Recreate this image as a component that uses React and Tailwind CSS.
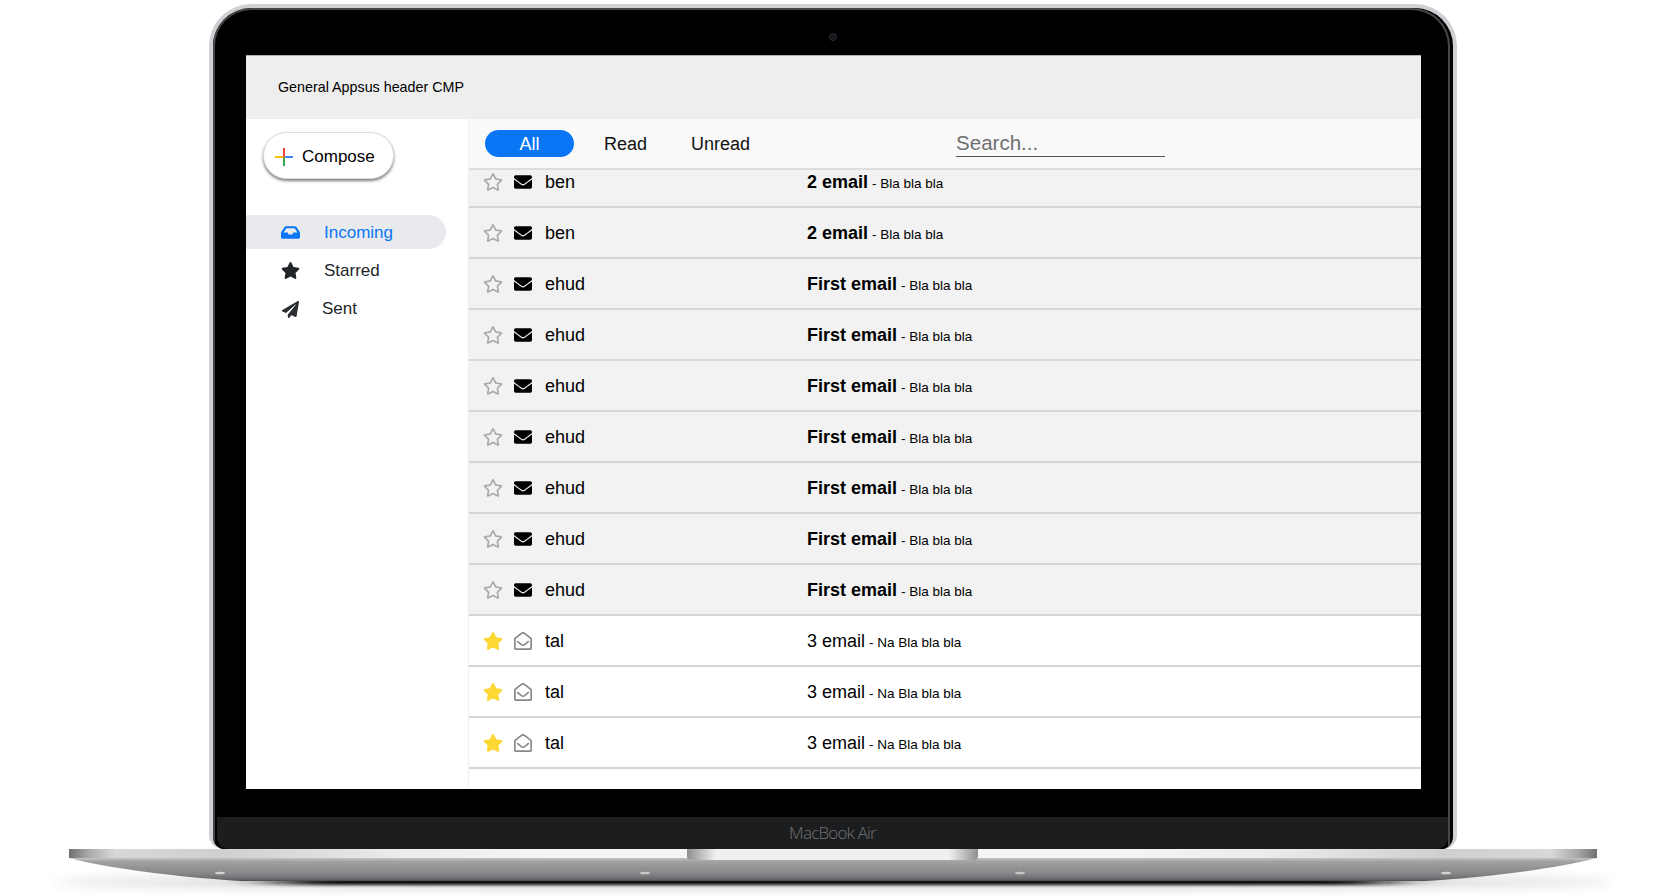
import React from 'react';
import { FaEnvelope, FaInbox, FaPaperPlane, FaRegEnvelopeOpen, FaRegStar, FaStar } from 'react-icons/fa';

const emails = [
  { from: 'ben', subject: '2 email', body: 'Bla bla bla' },
  { from: 'ben', subject: '2 email', body: 'Bla bla bla' },
  ...Array.from({ length: 7 }, () => ({ from: 'ehud', subject: 'First email', body: 'Bla bla bla' })),
  ...Array.from({ length: 3 }, () => ({ from: 'tal', subject: '3 email', body: 'Na Bla bla bla', read: true, starred: true })),
];

const PlusIcon = () => (
  <svg viewBox="0 0 18 18" className="w-[18px] h-[18px] shrink-0">
    <rect x="8" y="0" width="2" height="8" fill="#ea4335" />
    <rect x="8" y="10" width="2" height="8" fill="#34a853" />
    <rect x="0" y="8" width="8" height="2" fill="#fbbc05" />
    <rect x="10" y="8" width="8" height="2" fill="#4285f4" />
    <rect x="8" y="8" width="2" height="2" fill="#c9853a" />
  </svg>
);

const EmailRow = ({ email }) => (
  <div className={`flex items-center h-[51px] shrink-0 pl-[14px] pt-[1px] border-b-2 border-[#d6d6d6] text-black ${email.read ? 'bg-white' : 'bg-[#f2f2f2]'}`}>
    {email.starred ? (
      <FaStar className="w-5 h-5 shrink-0 text-[#fdd835]" />
    ) : (
      <FaRegStar className="w-5 h-5 shrink-0 text-[#aaaaaa]" />
    )}
    <div className="ml-[11px] w-[18px] shrink-0">
      {email.read ? (
        <FaRegEnvelopeOpen className="w-[18px] h-[18px] text-[#888888]" />
      ) : (
        <FaEnvelope className="w-[18px] h-[18px] text-black" />
      )}
    </div>
    <span className="ml-[13px] w-[262px] shrink-0 text-[18px]">{email.from}</span>
    <span className={`pt-[1px] text-[18px] ${email.read ? '' : 'font-bold'}`}>{email.subject}</span>
    <span className="text-[13.5px] ml-[4px] mt-[4px]">- {email.body}</span>
  </div>
);

const Base = () => (
  <svg viewBox="0 849 1666 47" className="block w-[1666px] h-[47px] shrink-0">
    <defs>
      <linearGradient id="strip" x1="69" x2="1597" y1="0" y2="0" gradientUnits="userSpaceOnUse">
        <stop offset="0" stopColor="#6f6f6f" />
        <stop offset="0.012" stopColor="#a6a6a6" />
        <stop offset="0.03" stopColor="#d8d8d8" />
        <stop offset="0.1" stopColor="#cfcfcf" />
        <stop offset="0.22" stopColor="#ececec" />
        <stop offset="0.32" stopColor="#f5f5f5" />
        <stop offset="0.68" stopColor="#f5f5f5" />
        <stop offset="0.78" stopColor="#ececec" />
        <stop offset="0.9" stopColor="#cfcfcf" />
        <stop offset="0.97" stopColor="#d8d8d8" />
        <stop offset="0.988" stopColor="#a6a6a6" />
        <stop offset="1" stopColor="#6f6f6f" />
      </linearGradient>
      <linearGradient id="body" x1="0" x2="0" y1="858" y2="881" gradientUnits="userSpaceOnUse">
        <stop offset="0" stopColor="#c4c4c6" />
        <stop offset="0.15" stopColor="#a2a2a4" />
        <stop offset="0.7" stopColor="#858587" />
        <stop offset="0.92" stopColor="#6a6a6e" />
        <stop offset="1" stopColor="#4a4a4e" />
      </linearGradient>
      <linearGradient id="notch" x1="687" x2="978" y1="0" y2="0" gradientUnits="userSpaceOnUse">
        <stop offset="0" stopColor="#8f8f8f" />
        <stop offset="0.1" stopColor="#f0f0f0" />
        <stop offset="0.9" stopColor="#f0f0f0" />
        <stop offset="1" stopColor="#8f8f8f" />
      </linearGradient>
      <filter id="soft" x="-10%" y="-400%" width="120%" height="900%">
        <feGaussianBlur stdDeviation="6" />
      </filter>
      <filter id="tight" x="-10%" y="-300%" width="120%" height="700%">
        <feGaussianBlur stdDeviation="30 1.5" />
      </filter>
    </defs>
    <ellipse cx="833" cy="882" rx="780" ry="6" fill="#000" opacity="0.2" filter="url(#soft)" />
    <rect x="280" y="879" width="1106" height="6" fill="#111" filter="url(#tight)" />
    <path d="M69 858 H1597 C1560 868 1490 877 1425 881 H241 C176 877 106 868 69 858 Z" fill="url(#body)" />
    <rect x="69" y="849" width="1528" height="9" fill="url(#strip)" />
    <path d="M687 849 H978 V856 Q978 860 974 860 H691 Q687 860 687 856 Z" fill="url(#notch)" />
    <ellipse cx="220" cy="873" rx="5" ry="1.3" fill="#d4d4d4" />
    <ellipse cx="645" cy="873" rx="5" ry="1.3" fill="#c8c8c8" />
    <ellipse cx="1020" cy="873" rx="5" ry="1.3" fill="#c8c8c8" />
    <ellipse cx="1446" cy="873" rx="5" ry="1.3" fill="#d4d4d4" />
  </svg>
);

const App = () => {
  return (
    <div className="w-[1666px] h-[896px] overflow-hidden bg-white flex flex-col items-center pt-[4px] font-['Liberation_Sans',Arial,sans-serif]">
      {/* lid */}
      <div className="w-[1248px] h-[845px] shrink-0 flex flex-col px-[4px] pt-[4px] rounded-t-[42px] rounded-b-[14px] bg-[#cfd0d4]">
        <div className="flex-1 flex flex-col pr-[3px] overflow-hidden rounded-t-[38px] rounded-b-[12px] bg-black">
          <div className="flex-1 flex flex-col overflow-hidden border-2 border-b-0 border-[#47474a] rounded-t-[38px] bg-black">
            <div className="h-[45px] pt-[9px] flex items-center justify-center shrink-0">
              <div className="w-2 h-2 ml-[2px] rounded-full bg-[#16161c] border border-[#2b2b33]" />
            </div>

            {/* screen */}
            <div className="ml-[31px] w-[1175px] h-[734px] shrink-0 flex flex-col overflow-hidden bg-white border-t border-[#b0b0b0]">
              <header className="h-[63px] shrink-0 flex items-center pl-[32px] bg-[#eeeeee] text-[14.3px] text-black">
                General Appsus header CMP
              </header>

              <div className="flex-1 flex min-h-0">
                <aside className="w-[223px] shrink-0 pt-[13px] bg-white border-r border-[#eeeeee]">
                  <button className="ml-[17px] w-[131px] h-[47px] flex items-center pl-[11px] gap-[9px] rounded-full bg-white border border-[#dddddd] shadow-[0_2px_3px_rgba(0,0,0,0.5)] text-[17px] text-black">
                    <span className="pt-[2px]"><PlusIcon /></span>
                    <span className="pt-[3px]">Compose</span>
                  </button>
                  <nav className="mt-[36px] flex flex-col gap-[4.5px] text-[17px]">
                    <div className="w-[200px] h-[34px] flex items-center pl-[35px] gap-[24px] rounded-r-full bg-[#e8eaed] text-[#0a76f6]">
                      <FaInbox className="w-[19px] h-[19px]" />
                      <span className="pt-[1px]">Incoming</span>
                    </div>
                    <div className="h-[34px] flex items-center pl-[35px] gap-[24px] text-[#212529]">
                      <FaStar className="w-[19px] h-[19px]" />
                      Starred
                    </div>
                    <div className="h-[34px] flex items-center pl-[36px] gap-[23px] text-[#212529]">
                      <FaPaperPlane className="w-[17px] h-[17px] text-[#2b2f33]" />
                      Sent
                    </div>
                  </nav>
                </aside>

                <main className="flex-1 min-w-0 flex flex-col">
                  <div className="relative z-10 h-[51px] shrink-0 flex items-center pl-[16px] bg-[#f9f9f9] border-b-2 border-[#dddddd] text-[18px] text-[#111111]">
                    <button className="w-[89px] h-[27px] pt-[2px] flex items-center justify-center rounded-full bg-[#0a76f6] text-white">All</button>
                    <span className="ml-[30px] pt-[2px]">Read</span>
                    <span className="ml-[44px] pt-[2px]">Unread</span>
                    <input
                      placeholder="Search..."
                      className="ml-[206px] w-[209px] h-[26px] mt-[1px] bg-transparent border-b border-[#555555] outline-none text-[20.5px] placeholder:text-[#6f6f6f]"
                    />
                  </div>
                  <div className="flex-1 min-h-0 overflow-hidden bg-white">
                    <div className="-mt-[13px] flex flex-col">
                      {emails.map((email, i) => (
                        <EmailRow key={i} email={email} />
                      ))}
                    </div>
                  </div>
                </main>
              </div>
            </div>

            {/* chin */}
            <div className="mt-[28px] ml-[2px] flex-1 flex items-center justify-center rounded-b-[12px] bg-[#1c1d1f] font-['Open_Sans',sans-serif] font-light text-[17px] tracking-[-0.8px] text-[#727376]">
              MacBook Air
            </div>
          </div>
        </div>
      </div>
      <Base />
    </div>
  );
};

export default App;
